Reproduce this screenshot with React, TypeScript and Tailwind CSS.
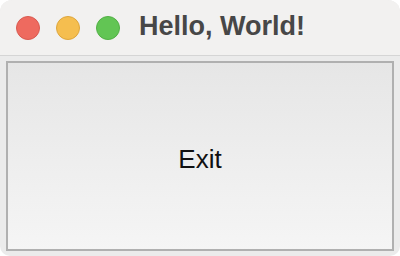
import React from 'react';

export default function App() {
  return (
    <div className="w-[400px] h-[256px] bg-white">
      <div className="w-full h-full flex flex-col rounded-t-[12px] rounded-b-[10px] overflow-hidden bg-[#ebebeb]">
        <div className="h-[56px] shrink-0 flex items-center bg-[#f2f1f0] border-b border-[#d5d5d5] pl-[16px]">
          <div className="flex items-center gap-[16px]">
            <span className="w-[24px] h-[24px] rounded-full bg-[#ee6a5f] border border-[#d95a50]" />
            <span className="w-[24px] h-[24px] rounded-full bg-[#f5be4f] border border-[#dea63c]" />
            <span className="w-[24px] h-[24px] rounded-full bg-[#62c554] border border-[#52b045]" />
          </div>
          <span
            className="ml-[19px] mb-[2px] text-[27px] font-bold text-[#474747] leading-none"
            style={{ fontFamily: '"Liberation Sans", Arial, sans-serif' }}
          >
            Hello, World!
          </span>
        </div>
        <div className="flex-1 px-[6px] pt-[5px] pb-[5px] flex">
          <button
            className="flex-1 border-2 border-[#b0b0b0] bg-gradient-to-b from-[#e6e6e6] to-[#f5f5f5] flex items-center justify-center pt-[6px] text-[26px] text-[#111]"
            style={{ fontFamily: '"Liberation Sans", Arial, sans-serif' }}
          >
            Exit
          </button>
        </div>
      </div>
    </div>
  );
}
